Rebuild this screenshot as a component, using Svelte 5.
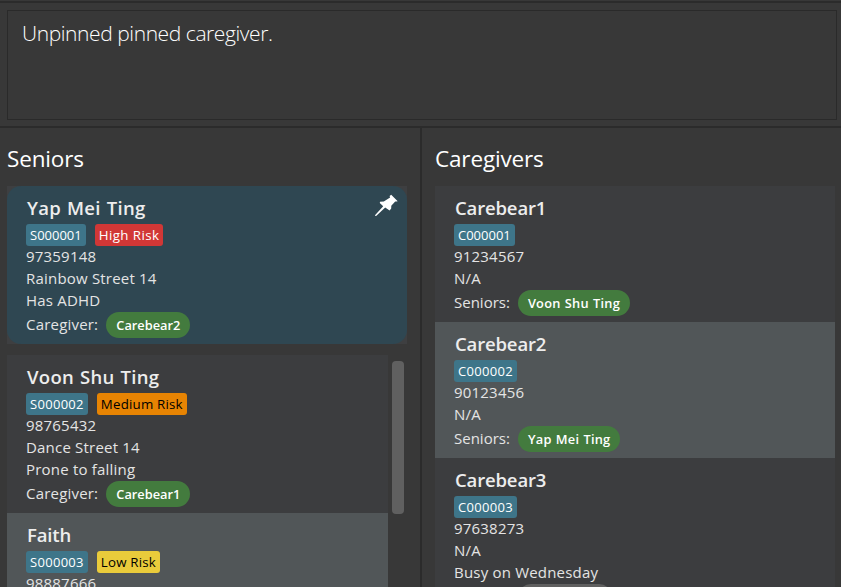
<script>
  const pinned = { name: 'Yap Mei Ting', id: 'S000001', risk: 'High', lines: ['97359148', 'Rainbow Street 14', 'Has ADHD'], label: 'Caregiver:', link: 'Carebear2' };
  const seniors = [
    { name: 'Voon Shu Ting', id: 'S000002', risk: 'Medium', lines: ['98765432', 'Dance Street 14', 'Prone to falling'], label: 'Caregiver:', link: 'Carebear1' },
    { name: 'Faith', id: 'S000003', risk: 'Low', lines: ['98887666'] }
  ];
  const caregivers = [
    { name: 'Carebear1', id: 'C000001', lines: ['91234567', 'N/A'], label: 'Seniors:', link: 'Voon Shu Ting' },
    { name: 'Carebear2', id: 'C000002', lines: ['90123456', 'N/A'], label: 'Seniors:', link: 'Yap Mei Ting' },
    { name: 'Carebear3', id: 'C000003', lines: ['97638273', 'N/A', 'Busy on Wednesday'], label: 'Seniors:', link: 'None', muted: true }
  ];
</script>

{#snippet card(p)}
  <h2 class:full={p.name.includes(' ')}>{p.name}</h2>
  <div class="tags">
    <span class="tag id" class:narrow={p.id.endsWith('1')}>{p.id}</span>
    {#if p.risk}<span class="tag {p.risk.toLowerCase()}">{p.risk} Risk</span>{/if}
  </div>
  <div class="lines">
    {#each p.lines as line}<p>{line}</p>{/each}
  </div>
  {#if p.link}
    <div class="relation">
      <span class="label">{p.label}</span>
      <span class="pill" class:full={p.link.includes(' ')} class:muted={p.muted}>{p.link}</span>
    </div>
  {/if}
{/snippet}

<main>
  <section class="result"><div class="message"><span>Unpinned pinned caregiver.</span></div></section>
  <div class="panes">
    <section class="left">
      <h1>Seniors</h1>
      <div class="pinwrap">
        <article class="card pinned">
          {@render card(pinned)}
          <svg class="pin" width="24" height="24" viewBox="0 0 24 24">
            <path d="M16.2 0.8 22.7 7.2 21.2 7.5 20.2 7.5 16.3 11.7 16.2 14.5 14.6 16.4 10.2 13.4 1.1 22 0.2 22 0.2 21 8.2 12.2 4.8 9 5 7.7 8.8 7.4 15.1 3.5 14.6 2.1Z" fill="#fff" />
          </svg>
        </article>
      </div>
      <div class="scroll">
        <div class="list">
          {#each seniors as s, i}<article class="card" class:alt={i % 2}>{@render card(s)}</article>{/each}
        </div>
        <div class="thumb"></div>
      </div>
    </section>
    <section class="right">
      <h1>Caregivers</h1>
      <div class="list">
        {#each caregivers as c, i}<article class="card" class:alt={i % 2}>{@render card(c)}</article>{/each}
      </div>
    </section>
  </div>
</main>

<style>
  :global(body) { margin: 0; background: #383838; }
  main {
    box-sizing: border-box;
    width: 841px;
    height: 587px;
    overflow: hidden;
    display: flex;
    flex-direction: column;
    background: #383838;
    color: #e4e4e4;
    font-family: "Open Sans", "Noto Sans", sans-serif;
    font-kerning: none;
    white-space: nowrap;
  }
  .result { flex: none; box-sizing: border-box; height: 127px; padding: 7px 4px 5px 7px; margin-top: 1px; border-top: 2px solid #2b2b2b; border-bottom: 2px solid #2b2b2b; }
  .message { box-sizing: border-box; height: 110px; border: 1px solid #2a2a2a; padding: 6px 14px; font-size: 21px; line-height: 32px; font-weight: 300; letter-spacing: -0.42px; color: #fff; }
  .panes { flex: 1; min-height: 0; display: flex; }
  section { min-width: 0; }
  .left { box-sizing: border-box; width: 422px; padding-left: 7px; border-right: 2px solid #2b2b2b; display: flex; flex-direction: column; }
  .right { flex: 1; padding: 0 6px 0 13px; }
  h1 { flex: none; margin: 0; height: 58px; line-height: 61px; font-size: 22.5px; font-weight: 400; letter-spacing: -0.15px; color: #fff; }
  .card { box-sizing: border-box; padding: 8px 19px 6px; background: #3c3d3f; }
  .card.alt { background: #515658; }
  .pinwrap { width: 400px; background: #3e3f41; margin-bottom: 11px; }
  .card.pinned { position: relative; border-radius: 14px; background: #2f4752; }
  .pin { position: absolute; right: 8px; top: 8px; }
  .scroll { flex: 1; min-height: 0; display: flex; gap: 4px; }
  .scroll .list { width: 381px; }
  .thumb { width: 12px; height: 153px; margin-top: 6px; border-radius: 4px; background: #606060; }
  h2 { margin: 0 0 0 1px; height: 30px; line-height: 27px; font-size: 18.5px; font-weight: 600; letter-spacing: -0.15px; color: #ededed; }
  h2.full { letter-spacing: 0.3px; word-spacing: 0.8px; }
  .tags { display: flex; gap: 9px; height: 22px; }
  .tag { padding: 0 4px; border-radius: 3px; background: #3e7589; color: #fff; font-size: 13.3px; line-height: 22px; font-weight: 500; letter-spacing: 0.2px; }
  .tag.id { font-size: 13px; letter-spacing: 0.3px; }
  .tag.id.narrow { letter-spacing: 0; }
  .tag.high { background: #d13736; letter-spacing: 0.42px; }
  .tag.medium { background: #e78403; color: #000; }
  .tag.low { background: #e9cb3b; color: #000; }
  .lines { margin-top: -1px; margin-bottom: 1px; }
  p { margin: 0; font-size: 15px; line-height: 22px; letter-spacing: 0.2px; }
  .relation { display: flex; gap: 8px; height: 26px; line-height: 26px; font-size: 15px; }
  .left .label { letter-spacing: 0.2px; }
  .label { line-height: 25px; }
  .pill { padding: 0 10px; border-radius: 13px; background: #437b3e; color: #fff; font-size: 12.8px; font-weight: 600; }
  .pill.full { letter-spacing: 0.25px; word-spacing: 0.6px; }
  .pill.muted { background: #606060; width: 74px; }
</style>
